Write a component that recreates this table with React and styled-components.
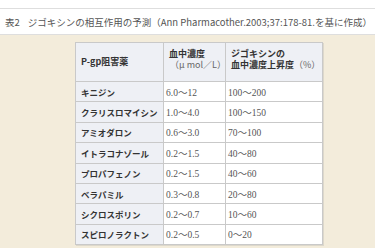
import React from "react"
import styled, { createGlobalStyle } from "styled-components"

const GlobalStyle = createGlobalStyle`
  html, body {
    margin: 0;
    padding: 0;
    background: #ffffff;
  }
  body {
    font-family: "Noto Sans CJK JP", "Noto Sans", sans-serif;
  }
`

const Page = styled.div`
  width: 375px;
  height: 248px;
  display: flex;
  flex-direction: column;
  overflow: hidden;
  background: #ffffff;
`

const Caption = styled.div`
  margin-top: 8px;
  height: 25px;
  border-top: 1px solid #dedede;
  border-bottom: 1px solid #dedede;
  display: flex;
  align-items: center;
  padding-left: 5px;
  font-size: 9.5px;
  color: #555555;
  white-space: nowrap;
`

const Label = styled.span`
  margin-right: 8px;
`

const Panel = styled.div`
  flex: 1;
  background: #f3ecdb;
  padding: 7px 0 0 75px;
`

const Table = styled.table`
  width: 247px;
  table-layout: fixed;
  border-collapse: collapse;
  background: #ffffff;
  border: 1px solid #c4c4c4;
  box-shadow: 1px 1px 0 #ddd8cb;
  font-size: 9px;
  color: #333333;
`

const Col = styled.col`
  width: ${props => props.w}px;
`

const HeadCell = styled.th`
  height: 32px;
  padding: ${props => (props.top ? "0 0 6px 5px" : "0 0 0 5px")};
  background: #eef0f5;
  border: 1px solid #c9c9c9;
  text-align: left;
  font-weight: bold;
  vertical-align: middle;
  line-height: 11.5px;
  white-space: nowrap;
`

const Unit = styled.span`
  font-weight: normal;
  color: #666666;
  padding-left: ${props => (props.indent ? "1px" : "0")};
`

const Row = styled.tr`
  height: 20.4px;
`

const NameCell = styled.td`
  padding: 0 0 0 5px;
  background: #eef0f5;
  border: 1px solid #c9c9c9;
  font-size: 8.5px;
  font-weight: bold;
  white-space: nowrap;
`

const ValueCell = styled.td`
  padding: 0 2px 0 2px;
  border: 1px solid #c9c9c9;
  font-family: "Liberation Serif", "Noto Sans CJK JP", serif;
  font-size: 9.5px;
  color: #555555;
  white-space: nowrap;
`

const rows = [
  ["キニジン", "6.0～12", "100～200"],
  ["クラリスロマイシン", "1.0～4.0", "100～150"],
  ["アミオダロン", "0.6～3.0", "70～100"],
  ["イトラコナゾール", "0.2～1.5", "40～80"],
  ["プロパフェノン", "0.2～1.5", "40～60"],
  ["ベラパミル", "0.3～0.8", "20～80"],
  ["シクロスポリン", "0.2～0.7", "10～60"],
  ["スピロノラクトン", "0.2～0.5", "0～20"]
]

const App = () => {
  return (
    <Page>
      <GlobalStyle />
      <Caption>
        <Label>表2</Label>
        ジゴキシンの相互作用の予測（Ann Pharmacother.2003;37:178-81.を基に作成）
      </Caption>
      <Panel>
        <Table>
          <colgroup>
            <Col w={88} />
            <Col w={62} />
            <Col w={97} />
          </colgroup>
          <thead>
            <tr>
              <HeadCell>P-gp阻害薬</HeadCell>
              <HeadCell top>
                血中濃度
                <br />
                <Unit indent>（μ mol／L）</Unit>
              </HeadCell>
              <HeadCell top>
                ジゴキシンの
                <br />
                血中濃度上昇度<Unit>（%）</Unit>
              </HeadCell>
            </tr>
          </thead>
          <tbody>
            {rows.map(([name, level, rise]) => (
              <Row key={name}>
                <NameCell>{name}</NameCell>
                <ValueCell>{level}</ValueCell>
                <ValueCell>{rise}</ValueCell>
              </Row>
            ))}
          </tbody>
        </Table>
      </Panel>
    </Page>
  )
}

export default App
